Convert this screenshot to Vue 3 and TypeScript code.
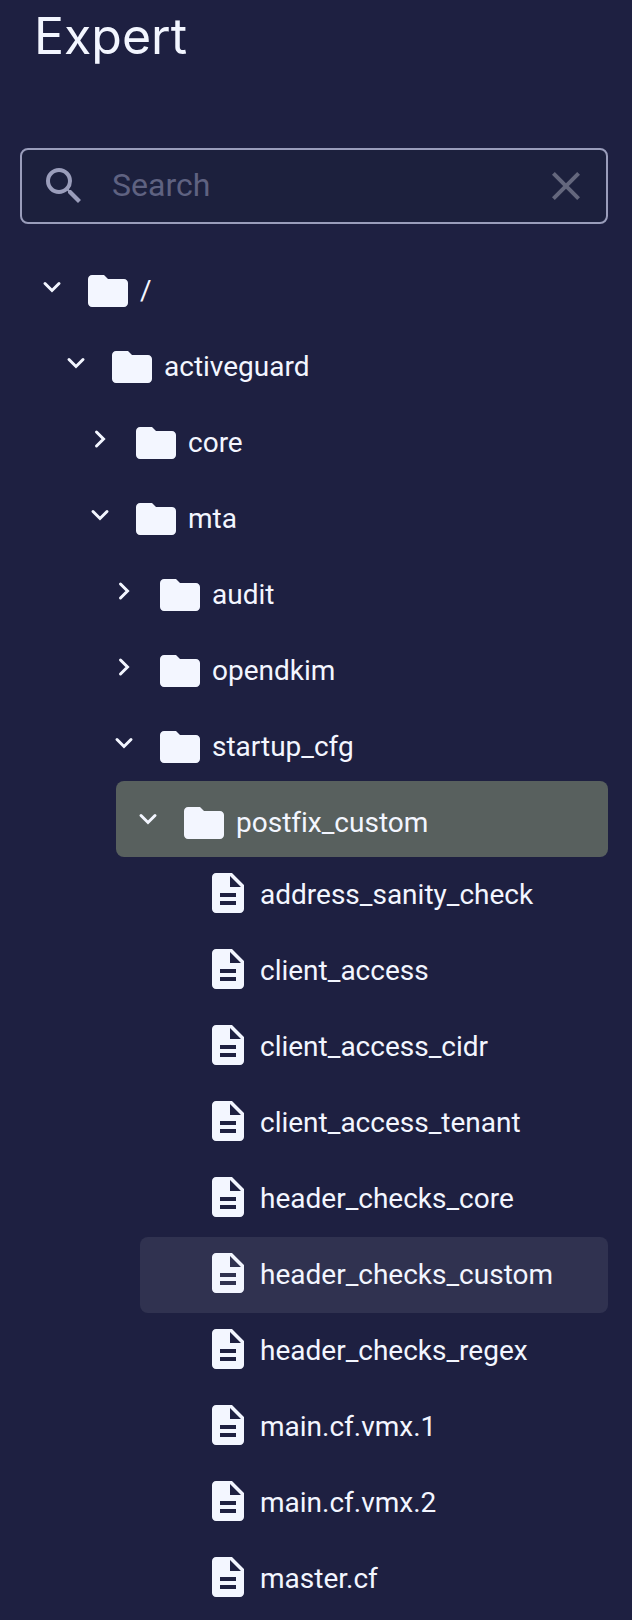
<script setup lang="ts">
import { computed, ref } from 'vue'

interface Entry {
  id: number
  name: string
  level: number
  kind: 'folder' | 'file'
  open?: boolean
  state?: 'selected' | 'hovered'
}

const query = ref('')

const entries = ref<Entry[]>([
  { id: 1, name: '/', level: 0, kind: 'folder', open: true },
  { id: 2, name: 'activeguard', level: 1, kind: 'folder', open: true },
  { id: 3, name: 'core', level: 2, kind: 'folder', open: false },
  { id: 4, name: 'mta', level: 2, kind: 'folder', open: true },
  { id: 5, name: 'audit', level: 3, kind: 'folder', open: false },
  { id: 6, name: 'opendkim', level: 3, kind: 'folder', open: false },
  { id: 7, name: 'startup_cfg', level: 3, kind: 'folder', open: true },
  { id: 8, name: 'postfix_custom', level: 4, kind: 'folder', open: true, state: 'selected' },
  { id: 9, name: 'address_sanity_check', level: 5, kind: 'file' },
  { id: 10, name: 'client_access', level: 5, kind: 'file' },
  { id: 11, name: 'client_access_cidr', level: 5, kind: 'file' },
  { id: 12, name: 'client_access_tenant', level: 5, kind: 'file' },
  { id: 13, name: 'header_checks_core', level: 5, kind: 'file' },
  { id: 14, name: 'header_checks_custom', level: 5, kind: 'file', state: 'hovered' },
  { id: 15, name: 'header_checks_regex', level: 5, kind: 'file' },
  { id: 16, name: 'main.cf.vmx.1', level: 5, kind: 'file' },
  { id: 17, name: 'main.cf.vmx.2', level: 5, kind: 'file' },
  { id: 18, name: 'master.cf', level: 5, kind: 'file' },
])

const visible = computed(() => {
  const term = query.value.trim().toLowerCase()
  if (term) return entries.value.filter((e) => e.name.toLowerCase().includes(term))
  const shown: Entry[] = []
  let closedAt = Infinity
  for (const entry of entries.value) {
    if (entry.level > closedAt) continue
    closedAt = entry.kind === 'folder' && !entry.open ? entry.level : Infinity
    shown.push(entry)
  }
  return shown
})

function activate(entry: Entry) {
  if (entry.kind === 'folder') entry.open = !entry.open
}
</script>

<template>
  <main class="panel">
    <h1 class="title">Expert</h1>

    <form class="search" role="search" @submit.prevent>
      <label class="search-label" for="tree-search" aria-label="Search">
        <svg class="icon" viewBox="0 0 24 24" aria-hidden="true">
          <path d="M15.5 14h-.79l-.28-.27A6.471 6.471 0 0 0 16 9.5 6.5 6.5 0 1 0 9.5 16c1.61 0 3.09-.59 4.23-1.57l.27.28v.79l5 4.99L20.49 19l-4.99-5zm-6 0C7.01 14 5 11.99 5 9.5S7.01 5 9.5 5 14 7.01 14 9.5 11.99 14 9.5 14z" />
        </svg>
      </label>
      <input id="tree-search" v-model="query" class="search-input" type="text" placeholder="Search" />
      <button class="clear" type="button" aria-label="Clear search" @click="query = ''">
        <svg class="icon" viewBox="0 0 24 24" aria-hidden="true">
          <path d="M19 6.41 17.59 5 12 10.59 6.41 5 5 6.41 10.59 12 5 17.59 6.41 19 12 13.41 17.59 19 19 17.59 13.41 12z" />
        </svg>
      </button>
    </form>

    <ul class="tree" role="tree" aria-label="Configuration files">
      <li
        v-for="entry in visible"
        :key="entry.id"
        role="treeitem"
        :aria-level="entry.level + 1"
        :aria-expanded="entry.kind === 'folder' ? entry.open : undefined"
        :class="['node', `level-${entry.level}`]"
      >
        <button type="button" :class="['row', entry.kind, entry.state]" @click="activate(entry)">
          <span class="toggle">
            <svg
              v-if="entry.kind === 'folder'"
              :class="['chevron', { closed: !entry.open }]"
              viewBox="0 0 24 24"
              aria-hidden="true"
            >
              <path d="M5 8.5l7 7 7-7" />
            </svg>
          </span>
          <span class="content">
            <svg class="icon" viewBox="0 0 24 24" aria-hidden="true">
              <path v-if="entry.kind === 'folder'" d="M10 4H4c-1.1 0-2 .9-2 2v12c0 1.1.9 2 2 2h16c1.1 0 2-.9 2-2V8c0-1.1-.9-2-2-2h-8z" />
              <path v-else fill-rule="evenodd" d="M14 2H6c-1.1 0-2 .9-2 2v16c0 1.1.9 2 2 2h12c1.1 0 2-.9 2-2V8zm2 16H8v-2h8zm0-4H8v-2h8zm-3-5V3.5L18.5 9z" />
            </svg>
            <span class="name">{{ entry.name }}</span>
          </span>
        </button>
      </li>
    </ul>
  </main>
</template>

<style>
body {
  margin: 0;
  background: #1e2041;
}
</style>

<style scoped>
.panel {
  box-sizing: border-box;
  min-height: 100vh;
  padding: 4px 24px 0 20px;
  background: #1e2041;
  color: #f3f6ff;
  font-family: Roboto, "Noto Sans", sans-serif;
  font-variant-ligatures: none;
}

.title {
  margin: 0 0 80px;
  padding-left: 14px;
  font-family: Inter, Lato, sans-serif;
  font-size: 50px;
  font-weight: 400;
  line-height: 64px;
}

.icon {
  display: block;
  flex: none;
  width: 48px;
  height: 48px;
  fill: currentColor;
}

.search {
  display: flex;
  align-items: center;
  box-sizing: border-box;
  height: 76px;
  margin-bottom: 25px;
  padding: 0 16px 0 18px;
  border: 2px solid #9a9dbb;
  border-radius: 8px;
  background: #1c203d;
}

.search-label {
  color: #9a9dbb;
}

.search-input {
  flex: 1;
  min-width: 0;
  padding: 0 24px 2px;
  border: 0;
  outline: 0;
  background: transparent;
  color: inherit;
  font-family: inherit;
  font-size: 32px;
  line-height: 40px;
}

.search-input::placeholder {
  color: #5f6281;
  opacity: 1;
}

.clear {
  padding: 0;
  border: 0;
  background: transparent;
  color: #64677d;
  cursor: pointer;
}

.tree {
  margin: 0;
  padding: 0;
  list-style: none;
}

.level-1 {
  padding-left: 24px;
}

.level-2 {
  padding-left: 48px;
}

.level-3 {
  padding-left: 72px;
}

.level-4 {
  padding-left: 96px;
}

.level-5 {
  padding-left: 120px;
}

.row {
  display: flex;
  align-items: center;
  box-sizing: border-box;
  width: 100%;
  height: 76px;
  padding: 0;
  border: 0;
  border-radius: 8px;
  background: transparent;
  color: inherit;
  font-family: inherit;
  font-size: 28px;
  font-variant-ligatures: none;
  line-height: 36px;
  text-align: left;
  cursor: pointer;
}

.selected {
  background: #58605e;
}

.hovered {
  background: #303250;
}

.toggle {
  display: flex;
  flex: none;
  justify-content: center;
  width: 64px;
}

.chevron {
  width: 24px;
  height: 24px;
  fill: none;
  stroke: currentColor;
  stroke-width: 3;
  stroke-linecap: round;
}

.closed {
  transform: rotate(-90deg);
}

.content {
  display: flex;
  align-items: center;
  gap: 8px;
  min-width: 0;
}

.folder .content {
  padding-top: 8px;
}

.file .content {
  padding-bottom: 4px;
}

.file .name {
  padding-top: 4px;
}

.name {
  white-space: nowrap;
}
</style>
